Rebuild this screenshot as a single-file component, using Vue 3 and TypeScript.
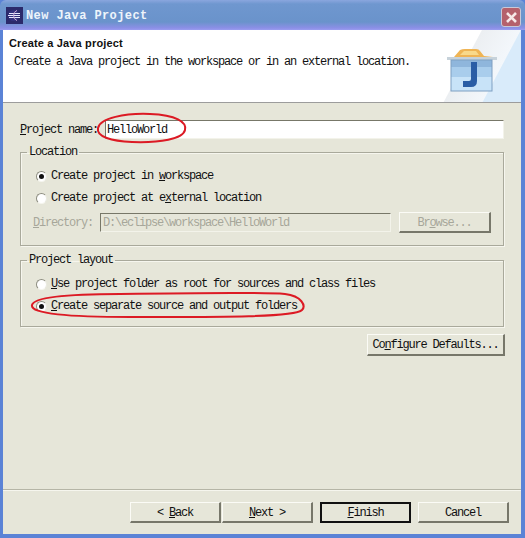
<script setup lang="ts">
const locationOptions = [
  { before: 'Create project in ', key: 'w', after: 'orkspace', checked: true },
  { before: 'Create project at e', key: 'x', after: 'ternal location', checked: false },
]
const layoutOptions = [
  { before: '', key: 'U', after: 'se project folder as root for sources and class files', checked: false },
  { before: '', key: 'C', after: 'reate separate source and output folders', checked: true },
]
</script>

<template>
  <div class="window">
    <div class="titlebar">
      <svg class="app-icon" width="17" height="17" viewBox="0 0 17 17">
        <rect width="17" height="17" fill="#2b2a6b" />
        <circle cx="7.5" cy="8.5" r="5.5" fill="#34337f" />
        <path d="M3 6.5h11M2 8.5h12M3 10.5h11" stroke="#e8e8ff" stroke-width="1" />
        <path d="M11 3.4a5.5 5.5 0 0 0 0 10.2" fill="none" stroke="#c9a8d8" stroke-width="1" />
      </svg>
      <span class="title">New Java Project</span>
      <span class="close">
        <svg width="13" height="13" viewBox="0 0 13 13">
          <path d="M2 2l9 9M11 2l-9 9" stroke="#f6e8e8" stroke-width="2.6" />
        </svg>
      </span>
    </div>
    <div class="content">
      <header class="banner">
        <div class="banner-text">
          <h1>Create a Java project</h1>
          <p>Create a Java project in the workspace or in an external location.</p>
        </div>
        <svg class="banner-icon" width="52" height="46" viewBox="0 0 52 46">
          <path d="M8 9l6-7q2-1 5-1h11q3 0 4 2l4 5 9 1v3H8z" fill="#efb454" />
          <path d="M14 7l4-4h12l3 4z" fill="#f9d98a" />
          <rect x="1" y="9" width="50" height="3" fill="#c7d2da" />
          <rect x="5" y="12" width="41" height="31" fill="#a9cdec" />
          <rect x="5" y="12" width="41" height="7" fill="#8fb6dc" />
          <rect x="5" y="29" width="41" height="14" fill="#c8e3f8" />
          <path d="M25 14h6v19q0 6-6 6h-8v-6h6q2 0 2-2z" fill="#2a5da5" />
          <rect x="5" y="12" width="41" height="31" fill="none" stroke="#7e9fc2" />
        </svg>
      </header>
      <main class="form">
        <div class="name-row">
          <label class="label"><u>P</u>roject name:</label>
          <div class="input">HelloWorld</div>
        </div>
        <fieldset class="group location">
          <legend>Location</legend>
          <div v-for="o in locationOptions" :key="o.after" class="radio-row">
            <span class="radio" :class="{ checked: o.checked }"></span>
            <span>{{ o.before }}<u>{{ o.key }}</u>{{ o.after }}</span>
          </div>
          <div class="dir-row">
            <span class="disabled-text"><u>D</u>irectory:</span>
            <div class="input disabled-input">D:\eclipse\workspace\HelloWorld</div>
            <div class="btn browse">Br<u>o</u>wse...</div>
          </div>
        </fieldset>
        <fieldset class="group layout">
          <legend>Project layout</legend>
          <div v-for="o in layoutOptions" :key="o.after" class="radio-row">
            <span class="radio" :class="{ checked: o.checked }"></span>
            <span><u>{{ o.key }}</u>{{ o.after }}</span>
          </div>
        </fieldset>
        <div class="configure-row">
          <div class="btn configure">Co<u>n</u>figure Defaults...</div>
        </div>
      </main>
      <footer class="footer">
        <div class="btn nav">&lt; <u>B</u>ack</div>
        <div class="btn nav next"><u>N</u>ext &gt;</div>
        <div class="btn nav finish"><u>F</u>inish</div>
        <div class="btn nav cancel">Cancel</div>
      </footer>
    </div>
    <svg class="marks" width="525" height="538" viewBox="0 0 525 538">
      <path d="M98 128C100 118 125 113 150 114C176 115 187 122 185 130C183 139 160 143 132 142C112 141 96 137 98 128Z" />
      <path d="M32 305C34 298 60 294 120 294C190 293 262 292 285 294C302 296 306 306 302 310C294 318 200 317 130 317C70 317 30 314 32 305Z" />
    </svg>
  </div>
</template>

<style>
html, body { margin: 0; background: #e6e6d9; }
</style>

<style scoped>
.window {
  position: relative;
  width: 525px;
  height: 538px;
  box-sizing: border-box;
  display: flex;
  flex-direction: column;
  overflow: hidden;
  background: #5b83d6;
  font-family: "Liberation Mono", "DejaVu Sans Mono", monospace;
  font-size: 12px;
  letter-spacing: -1.2px;
  color: #111;
}
.titlebar {
  height: 30px;
  flex: none;
  box-sizing: border-box;
  padding: 7px 4px 0 6px;
  display: flex;
  align-items: flex-start;
  background: linear-gradient(#8aa6de 0, #6f97cf 4px, #6a93cb 22px, #8c8fe6 28px, #9a9df0 30px);
  border-radius: 6px 6px 0 0;
}
.app-icon { flex: none; }
.title {
  margin-left: 3px;
  margin-top: 2px;
  font-size: 12px;
  font-weight: 700;
  letter-spacing: 0.4px;
  color: #eef4fb;
}
.close {
  margin-left: auto;
  width: 20px;
  height: 20px;
  box-sizing: border-box;
  display: flex;
  align-items: center;
  justify-content: center;
  background: #b5616c;
  border: 1px solid #c9c9d8;
  border-radius: 3px;
}
.content {
  flex: 1;
  min-height: 0;
  margin: 0 4px 4px 3px;
  display: flex;
  flex-direction: column;
  background: #e6e6d9;
}
.banner {
  height: 73px;
  flex: none;
  box-sizing: border-box;
  display: flex;
  justify-content: space-between;
  background: linear-gradient(118deg, #fff 86%, #eceff2 86.2%, #f3f7fb 93%, #d9ebfa 93.2%);
  border-bottom: 1px solid #9c9c9c;
  padding: 7px 23px 0 6px;
}
.banner h1 {
  margin: 0;
  font-family: "Liberation Sans", Arial, sans-serif;
  font-size: 11px;
  font-weight: 700;
  line-height: 13px;
  letter-spacing: 0.15px;
}
.banner p {
  margin: 6px 0 0 5px;
  line-height: 13px;
}
.banner-icon { margin-top: 11px; flex: none; }
.form {
  padding: 17px 17px 0 17px;
  display: flex;
  flex-direction: column;
}
.name-row {
  height: 19px;
  display: flex;
  align-items: center;
}
.label { width: 85px; flex: none; }
.input {
  flex: 1;
  height: 19px;
  box-sizing: border-box;
  padding: 2px 0 0 1px;
  line-height: 14px;
  background: #fff;
  border-top: 1px solid #777768;
  border-left: 1px solid #777768;
  border-right: 1px solid #f3f3ea;
  border-bottom: 1px solid #f3f3ea;
}
.group {
  margin: 0;
  padding: 0 12px 0 15px;
  box-sizing: border-box;
  min-width: 0;
  border: 1px solid #a9a99b;
  box-shadow: 1px 1px 0 #f6f6ee, inset 1px 1px 0 #f6f6ee;
}
.group legend {
  margin-left: -9px;
  padding: 0 2px;
  line-height: 12px;
}
.location { margin-top: 7px; height: 100px; }
.layout { margin-top: 8px; height: 73px; }
.radio-row {
  height: 14px;
  margin-top: 8px;
  display: flex;
  align-items: center;
  gap: 4px;
  white-space: pre;
}
.location .radio-row:first-of-type { margin-top: 11px; }
.layout .radio-row:first-of-type { margin-top: 11px; }
.radio {
  position: relative;
  width: 11px;
  height: 11px;
  flex: none;
  box-sizing: border-box;
  border-radius: 50%;
  background: #fff;
  border: 1px solid;
  border-color: #8d8d80 #e9e9e0 #f5f5ee #8d8d80;
}
.radio.checked::after {
  content: "";
  position: absolute;
  left: 2px;
  top: 2px;
  width: 5px;
  height: 5px;
  border-radius: 50%;
  background: #111;
}
.dir-row {
  margin-top: 7px;
  margin-left: -3px;
  display: flex;
  align-items: center;
}
.disabled-text { width: 67px; flex: none; color: #a6a69a; }
.disabled-input {
  flex: none;
  width: 291px;
  padding-left: 2px;
  background: #e6e6d9;
  color: #a6a69a;
}
.btn {
  box-sizing: border-box;
  display: flex;
  align-items: center;
  justify-content: center;
  background: #e6e6d9;
  border-top: 1px solid #fbfbf6;
  border-left: 1px solid #fbfbf6;
  border-right: 2px solid #77776a;
  border-bottom: 2px solid #77776a;
  white-space: pre;
}
.browse {
  width: 92px;
  height: 21px;
  margin-left: 8px;
  padding-top: 1px;
  color: #a6a69a;
}
.configure-row {
  margin-top: 7px;
  display: flex;
  justify-content: flex-end;
}
.configure { width: 138px; height: 22px; margin-right: -1px; }
.footer {
  margin-top: auto;
  height: 45px;
  box-sizing: border-box;
  flex: none;
  display: flex;
  padding: 12px 0 0 127px;
  border-top: 1px solid #b5b5a6;
  box-shadow: inset 0 1px 0 #f6f6ee;
}
.nav { width: 91px; height: 21px; padding-top: 1px; }
.next { margin-left: 1px; }
.finish {
  margin-left: 7px;
  border: 2px solid #111;
}
.cancel { margin-left: 7px; }
.marks {
  position: absolute;
  inset: 0;
  pointer-events: none;
}
.marks path {
  fill: none;
  stroke: #dc1a24;
  stroke-width: 2;
}
</style>
